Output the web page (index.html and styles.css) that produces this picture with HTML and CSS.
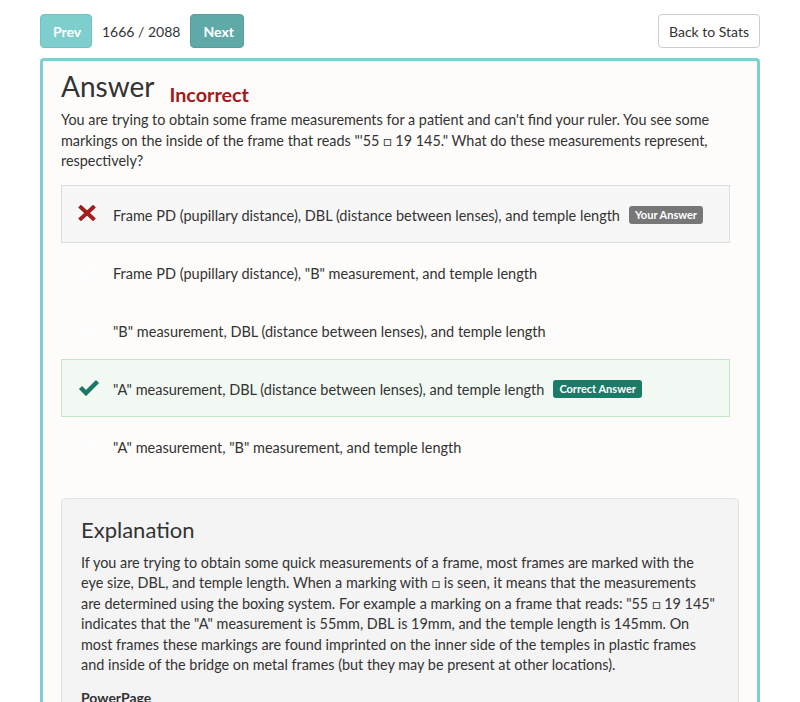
FILE: index.html
```html
<!DOCTYPE html>
<html>
<head>
<meta charset="utf-8">
<link rel="stylesheet" href="styles.css">
</head>
<body>
<div class="page">
  <div class="toolbar">
    <div class="nav">
      <button class="btn btn-prev">Prev</button>
      <span class="counter">1666 / 2088</span>
      <button class="btn btn-next">Next</button>
    </div>
    <button class="btn btn-back">Back to Stats</button>
  </div>
  <div class="panel">
    <div class="title-row">
      <h1 class="title">Answer</h1>
      <span class="status">Incorrect</span>
    </div>
    <p class="question">You are trying to obtain some frame measurements for a patient and can't find your ruler. You see some markings on the inside of the frame that reads "'55 □ 19 145." What do these measurements represent, respectively?</p>
    <ul class="options">
      <li class="option wrong">
        <span class="icon"><svg width="18" height="16" viewBox="0 0 18 16"><path d="M3 2.5 L15 13.5 M15 2.5 L3 13.5" stroke="#a31c1e" stroke-width="4" stroke-linecap="square"/></svg></span>
        <span class="opt-text">Frame PD (pupillary distance), DBL (distance between lenses), and temple length</span>
        <span class="badge badge-grey">Your Answer</span>
      </li>
      <li class="option">
        <span class="icon faint"><svg width="22" height="17" viewBox="0 0 22 17"><path d="M2.5 8.5 L8 14 L19.5 2.5" fill="none" stroke="#ffffff" stroke-width="4.5"/></svg></span>
        <span class="opt-text">Frame PD (pupillary distance), "B" measurement, and temple length</span>
      </li>
      <li class="option">
        <span class="icon faint"><svg width="22" height="17" viewBox="0 0 22 17"><path d="M2.5 8.5 L8 14 L19.5 2.5" fill="none" stroke="#ffffff" stroke-width="4.5"/></svg></span>
        <span class="opt-text">"B" measurement, DBL (distance between lenses), and temple length</span>
      </li>
      <li class="option right">
        <span class="icon"><svg width="22" height="17" viewBox="0 0 22 17"><path d="M2.5 8.5 L8 14 L19.5 2.5" fill="none" stroke="#1b7868" stroke-width="4.5"/></svg></span>
        <span class="opt-text">"A" measurement, DBL (distance between lenses), and temple length</span>
        <span class="badge badge-green">Correct Answer</span>
      </li>
      <li class="option">
        <span class="icon faint"><svg width="22" height="17" viewBox="0 0 22 17"><path d="M2.5 8.5 L8 14 L19.5 2.5" fill="none" stroke="#ffffff" stroke-width="4.5"/></svg></span>
        <span class="opt-text">"A" measurement, "B" measurement, and temple length</span>
      </li>
    </ul>
    <div class="well">
      <h2 class="well-title">Explanation</h2>
      <p class="well-text">If you are trying to obtain some quick measurements of a frame, most frames are marked with the eye size, DBL, and temple length. When a marking with □ is seen, it means that the measurements are determined using the boxing system. For example a marking on a frame that reads: "55 □ 19 145" indicates that the "A" measurement is 55mm, DBL is 19mm, and the temple length is 145mm. On most frames these markings are found imprinted on the inner side of the temples in plastic frames and inside of the bridge on metal frames (but they may be present at other locations).</p>
      <p class="source">PowerPage</p>
    </div>
  </div>
</div>
</body>
</html>
```

FILE: styles.css
```css
* { box-sizing: border-box; }
html, body { margin: 0; padding: 0; background: #ffffff; }
body {
  font-family: Lato, "Open Sans", sans-serif;
  color: #333333;
  font-size: 15px;
  overflow: hidden;
}
.page { padding: 14px 40px 0 40px; }
.toolbar {
  display: flex;
  justify-content: space-between;
  align-items: center;
  height: 34px;
}
.nav { display: flex; align-items: center; }
.btn {
  font-family: inherit;
  height: 34px;
  border-radius: 4px;
  font-size: 14px;
  padding: 0 12px;
  border: 1px solid transparent;
  cursor: pointer;
}
.btn-prev {
  width: 52px;
  background: #7ecece;
  border-color: #71c2c2;
  color: #ffffff;
  font-weight: 700;
}
.btn-next {
  width: 54px;
  background: #5faaa9;
  border-color: #569e9d;
  color: #ffffff;
  font-weight: 700;
}
.counter { margin: 0 10px; font-size: 14px; color: #333; }
.btn-back {
  width: 102px;
  background: #ffffff;
  border-color: #cccccc;
  color: #333;
  font-size: 14px;
  padding: 0;
}
.panel {
  margin-top: 10px;
  border: 3px solid #7ecfcf;
  border-radius: 4px;
  background: #fdfcfa;
  padding: 9px 18px 20px 18px;
  height: 700px;
}
.title-row { display: flex; align-items: baseline; }
.title {
  margin: 0;
  font-size: 28px;
  font-weight: 400;
  line-height: 32px;
  color: #333;
}
.status {
  margin-left: 15px;
  font-size: 19.8px;
  font-weight: 700;
  color: #a3191d;
  position: relative;
  top: 5px;
}
.question {
  margin: 8px 0 13px 0;
  line-height: 20.5px;
  font-size: 14.4px;
}
.options {
  list-style: none;
  margin: 0 9px 0 0;
  padding: 0;
}
.option {
  display: flex;
  align-items: center;
  height: 58px;
  padding: 3px 18px 0 16px;
  border: 1px solid transparent;
  font-size: 14.5px;
}
.option.wrong { background: #f7f7f7; border-color: #dddddd; }
.option.right { background: #f2f9f3; border-color: #c3e6c3; }
.icon { width: 35px; display: flex; align-items: center; position: relative; top: -2px; }
.icon.faint { opacity: 0.6; }
.badge {
  margin-left: 9px;
  font-size: 11px;
  font-weight: 700;
  color: #fff;
  padding: 2px 6px;
  border-radius: 3px;
  line-height: 14px;
}
.badge-grey { background: #777777; }
.badge-green { background: #1b7a68; }
.well {
  margin-top: 23px;
  background: #f4f4f4;
  border: 1px solid #e3e3e3;
  border-radius: 4px;
  padding: 18px 19px;
}
.well-title {
  margin: 0 0 10px 0;
  font-size: 22px;
  font-weight: 400;
  line-height: 26px;
}
.well-text { margin: 0 0 13px 0; line-height: 20.6px; font-size: 14.4px; }
.source { margin: 0; font-weight: 700; font-size: 14px; }
```
